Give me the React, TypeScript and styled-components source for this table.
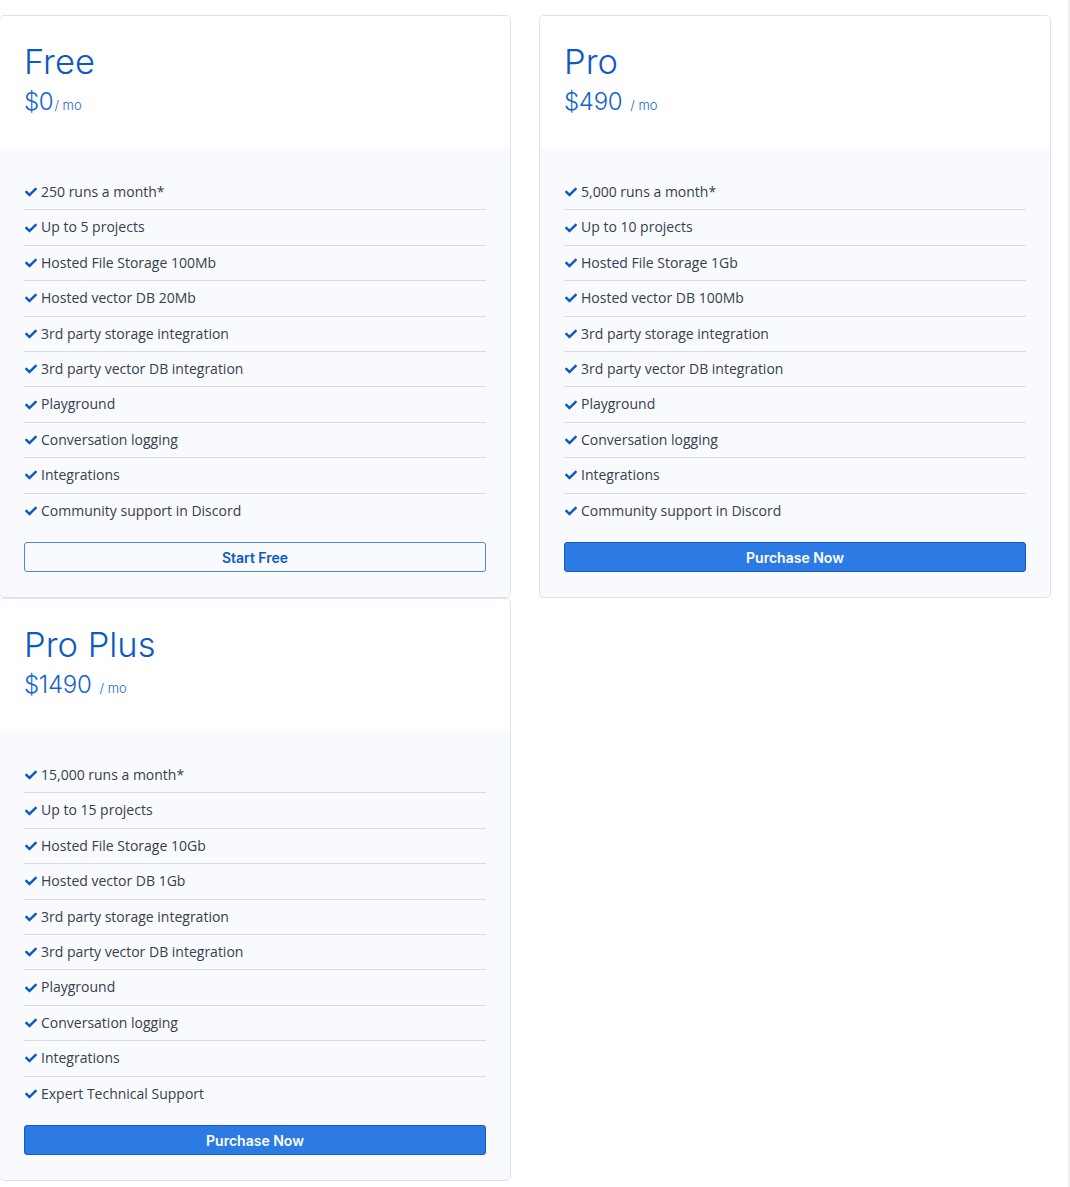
import styled, { createGlobalStyle } from "styled-components";
import { FaCheck } from "react-icons/fa";

type Plan = {
  name: string;
  price: string;
  tight?: boolean;
  features: string[];
  cta: string;
  primary?: boolean;
};

const common = [
  "3rd party storage integration",
  "3rd party vector DB integration",
  "Playground",
  "Conversation logging",
  "Integrations",
];

const plans: Plan[] = [
  {
    name: "Free",
    price: "$0",
    tight: true,
    features: [
      "250 runs a month*",
      "Up to 5 projects",
      "Hosted File Storage 100Mb",
      "Hosted vector DB 20Mb",
      ...common,
      "Community support in Discord",
    ],
    cta: "Start Free",
  },
  {
    name: "Pro",
    price: "$490",
    features: [
      "5,000 runs a month*",
      "Up to 10 projects",
      "Hosted File Storage 1Gb",
      "Hosted vector DB 100Mb",
      ...common,
      "Community support in Discord",
    ],
    cta: "Purchase Now",
    primary: true,
  },
  {
    name: "Pro Plus",
    price: "$1490",
    features: [
      "15,000 runs a month*",
      "Up to 15 projects",
      "Hosted File Storage 10Gb",
      "Hosted vector DB 1Gb",
      ...common,
      "Expert Technical Support",
    ],
    cta: "Purchase Now",
    primary: true,
  },
];

export default function App() {
  return (
    <>
      <GlobalStyle />
      <Page>
        <Grid>
          {plans.map((p) => (
            <Card key={p.name}>
              <Header>
                <Title>{p.name}</Title>
                <Price>
                  {p.price}
                  <Per $tight={p.tight}>/ mo</Per>
                </Price>
              </Header>
              <Body>
                <Features>
                  {p.features.map((f) => (
                    <Feature key={f}>
                      <FaCheck />
                      {f}
                    </Feature>
                  ))}
                </Features>
                <Button $primary={p.primary}>{p.cta}</Button>
              </Body>
            </Card>
          ))}
        </Grid>
      </Page>
    </>
  );
}

const GlobalStyle = createGlobalStyle`
  html, body {
    margin: 0;
    padding: 0;
    background: #fff;
  }
  body {
    font-family: "Open Sans", "Noto Sans", sans-serif;
    color: #344050;
  }
  * {
    box-sizing: border-box;
  }
`;

const Page = styled.div`
  width: 1070px;
  min-height: 1187px;
  padding-top: 15px;
  border-right: 2px solid #eceef4;
  overflow: hidden;
`;

const Grid = styled.div`
  display: grid;
  grid-template-columns: 512px 512px;
  column-gap: 28px;
  margin-left: -1px;
`;

const Card = styled.div`
  height: 583px;
  display: flex;
  flex-direction: column;
  border: 1px solid #dde3ec;
  border-radius: 5px;
  overflow: hidden;
  background: #f9fafd;
`;

const Header = styled.div`
  height: 132px;
  flex: none;
  background: #fff;
  padding: 25px 24px 0;
`;

const Title = styled.div`
  font-family: "Inter", sans-serif;
  font-weight: 300;
  font-size: 34.5px;
  line-height: 42px;
  color: #0d5ac6;
`;

const Price = styled.div`
  margin-top: 4px;
  font-family: "Inter", sans-serif;
  font-weight: 300;
  font-size: 24px;
  line-height: 30px;
  letter-spacing: -0.3px;
  color: #1563cf;
`;

const Per = styled.span<{ $tight?: boolean }>`
  font-size: 13px;
  letter-spacing: 0;
  margin-left: ${(p) => (p.$tight ? "1px" : "8px")};
  color: #1766d2;
`;

const Body = styled.div`
  flex: 1;
  padding: 27px 24px 0;
  display: flex;
  flex-direction: column;
`;

const Features = styled.ul`
  list-style: none;
  margin: 0;
  padding: 0;
`;

const Feature = styled.li`
  display: flex;
  align-items: center;
  gap: 4px;
  font-size: 14px;
  line-height: 18.4px;
  padding: 8px 0;
  color: #344050;
  border-bottom: 1px solid #d8dde5;

  svg {
    width: 12px;
    height: 12px;
    color: #0b57c4;
    margin-left: 1px;
  }

  &:last-child {
    border-bottom: none;
  }
`;

const Button = styled.button<{ $primary?: boolean }>`
  margin-top: 14px;
  width: 462px;
  height: 30px;
  border-radius: 3px;
  font-family: "Inter", sans-serif;
  font-weight: 600;
  font-size: 14px;
  cursor: pointer;
  border: 1px solid ${(p) => (p.$primary ? "#1559c2" : "#4d88d6")};
  background: ${(p) => (p.$primary ? "#2c7be5" : "transparent")};
  color: ${(p) => (p.$primary ? "#fff" : "#0b58c4")};
`;
